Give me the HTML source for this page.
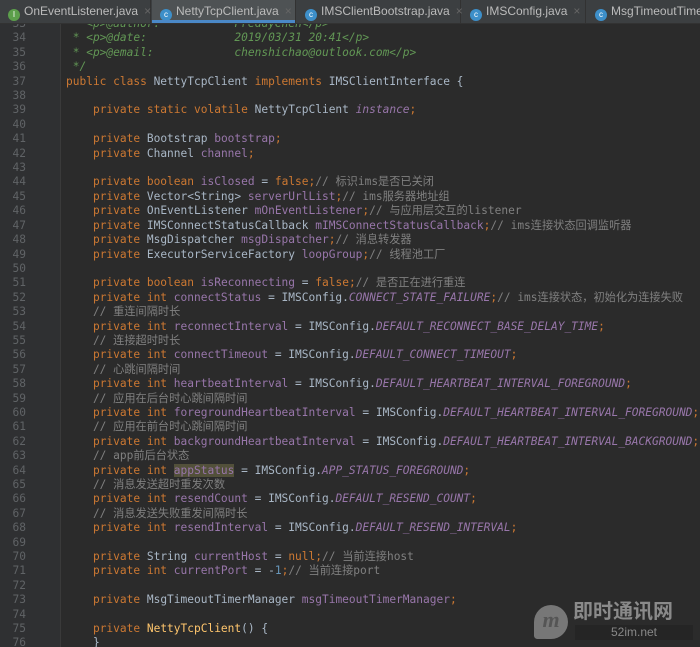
<!DOCTYPE html>
<html><head><meta charset="utf-8"><style>
html{overflow:hidden;width:700px;height:647px;}
body{margin:0;width:700px;height:647px;background:#2b2b2b;overflow:hidden;position:relative;font-family:"DejaVu Sans Mono","Liberation Mono","Noto Sans CJK SC",monospace;}
#tabs{position:absolute;left:0;top:0;width:700px;height:23px;background:#3c3f41;border-bottom:1px solid #323232;z-index:2;font-family:"Liberation Sans",sans-serif;font-size:12px;color:#bbb;overflow:hidden;}
.tab{position:absolute;top:0;height:23px;line-height:23px;white-space:nowrap;border-right:1px solid #323232;}
.tab .ic{display:inline-block;width:12px;height:12px;border-radius:50%;background:#3d8fc9;vertical-align:-2px;margin:0 4px 0 8px;color:#fff;font-size:8px;line-height:12px;text-align:center;}
.tab .x{color:#666;margin-left:6px;}
.act{background:#4e5254;}
.act:after{content:"";position:absolute;left:0;right:0;bottom:0;height:3px;background:#4a88c7;}
#gut{position:absolute;left:0;top:0;width:60px;height:647px;background:#2f3032;border-right:1px solid #3a3a3a;}
#code{position:absolute;left:0;top:17px;width:700px;font-size:11.2px;line-height:14.42px;color:#a9b7c6;white-space:normal;}
.l{height:14.42px;position:relative;white-space:nowrap;}
.n{position:absolute;left:0;width:26px;text-align:right;color:#606366;}
.t{position:absolute;left:66px;white-space:pre;}
.k{color:#cc7832}.f{color:#9876aa}.i{font-style:italic}.c{color:#808080}.d{color:#629755;font-style:italic}.m{color:#ffc66d}.num{color:#6897bb}
.hl{background:#52503a}
#wm{position:absolute;left:573px;top:598px;color:#8a8a8a;font-family:"Noto Sans CJK SC",sans-serif;font-size:20px;font-weight:bold;z-index:3;line-height:24px}
#wm2{position:absolute;left:575px;top:625px;width:118px;height:15px;background:#252525;color:#888;font:12px "Liberation Sans",sans-serif;text-align:center;line-height:15px;z-index:3}
#logo{position:absolute;left:534px;top:605px;width:34px;height:34px;border-radius:50% 50% 50% 10%;background:#777;color:#555;font:italic bold 22px "Liberation Serif",serif;text-align:center;line-height:30px;z-index:3}
</style></head><body>
<div id="tabs">
<div class="tab" style="left:0;width:150px"><span class="ic" style="background:#5c9f4b">I</span>OnEventListener.java<span class="x">×</span></div>
<div class="tab act" style="left:152px;width:143px"><span class="ic">c</span>NettyTcpClient.java<span class="x">×</span></div>
<div class="tab" style="left:297px;width:163px"><span class="ic">c</span>IMSClientBootstrap.java<span class="x">×</span></div>
<div class="tab" style="left:462px;width:123px"><span class="ic">c</span>IMSConfig.java<span class="x">×</span></div>
<div class="tab" style="left:587px;width:130px"><span class="ic">c</span>MsgTimeoutTimerManager.java</div>
</div>
<div id="gut"></div>
<div id="code"><div class="l"><span class="n">33</span><span class="t d"> * &lt;p&gt;@author:           FreddyChen&lt;/p&gt;</span></div><div class="l"><span class="n">34</span><span class="t d"> * &lt;p&gt;@date:             2019/03/31 20:41&lt;/p&gt;</span></div><div class="l"><span class="n">35</span><span class="t d"> * &lt;p&gt;@email:            chenshichao@outlook.com&lt;/p&gt;</span></div><div class="l"><span class="n">36</span><span class="t d"> */</span></div><div class="l"><span class="n">37</span><span class="t"><span class="k">public class </span>NettyTcpClient <span class="k">implements </span>IMSClientInterface {</span></div><div class="l"><span class="n">38</span></div><div class="l"><span class="n">39</span><span class="t">    <span class="k">private static volatile </span>NettyTcpClient <span class="f i">instance</span><span class="k">;</span></span></div><div class="l"><span class="n">40</span></div><div class="l"><span class="n">41</span><span class="t">    <span class="k">private </span>Bootstrap <span class="f">bootstrap</span><span class="k">;</span></span></div><div class="l"><span class="n">42</span><span class="t">    <span class="k">private </span>Channel <span class="f">channel</span><span class="k">;</span></span></div><div class="l"><span class="n">43</span></div><div class="l"><span class="n">44</span><span class="t">    <span class="k">private boolean </span><span class="f">isClosed </span>= <span class="k">false;</span><span class="c">// 标识ims是否已关闭</span></span></div><div class="l"><span class="n">45</span><span class="t">    <span class="k">private </span>Vector&lt;String&gt; <span class="f">serverUrlList</span><span class="k">;</span><span class="c">// ims服务器地址组</span></span></div><div class="l"><span class="n">46</span><span class="t">    <span class="k">private </span>OnEventListener <span class="f">mOnEventListener</span><span class="k">;</span><span class="c">// 与应用层交互的listener</span></span></div><div class="l"><span class="n">47</span><span class="t">    <span class="k">private </span>IMSConnectStatusCallback <span class="f">mIMSConnectStatusCallback</span><span class="k">;</span><span class="c">// ims连接状态回调监听器</span></span></div><div class="l"><span class="n">48</span><span class="t">    <span class="k">private </span>MsgDispatcher <span class="f">msgDispatcher</span><span class="k">;</span><span class="c">// 消息转发器</span></span></div><div class="l"><span class="n">49</span><span class="t">    <span class="k">private </span>ExecutorServiceFactory <span class="f">loopGroup</span><span class="k">;</span><span class="c">// 线程池工厂</span></span></div><div class="l"><span class="n">50</span></div><div class="l"><span class="n">51</span><span class="t">    <span class="k">private boolean </span><span class="f">isReconnecting </span>= <span class="k">false;</span><span class="c">// 是否正在进行重连</span></span></div><div class="l"><span class="n">52</span><span class="t">    <span class="k">private int </span><span class="f">connectStatus </span>= IMSConfig.<span class="f i">CONNECT_STATE_FAILURE</span><span class="k">;</span><span class="c">// ims连接状态，初始化为连接失败</span></span></div><div class="l"><span class="n">53</span><span class="t c">    // 重连间隔时长</span></div><div class="l"><span class="n">54</span><span class="t">    <span class="k">private int </span><span class="f">reconnectInterval </span>= IMSConfig.<span class="f i">DEFAULT_RECONNECT_BASE_DELAY_TIME</span><span class="k">;</span></span></div><div class="l"><span class="n">55</span><span class="t c">    // 连接超时时长</span></div><div class="l"><span class="n">56</span><span class="t">    <span class="k">private int </span><span class="f">connectTimeout </span>= IMSConfig.<span class="f i">DEFAULT_CONNECT_TIMEOUT</span><span class="k">;</span></span></div><div class="l"><span class="n">57</span><span class="t c">    // 心跳间隔时间</span></div><div class="l"><span class="n">58</span><span class="t">    <span class="k">private int </span><span class="f">heartbeatInterval </span>= IMSConfig.<span class="f i">DEFAULT_HEARTBEAT_INTERVAL_FOREGROUND</span><span class="k">;</span></span></div><div class="l"><span class="n">59</span><span class="t c">    // 应用在后台时心跳间隔时间</span></div><div class="l"><span class="n">60</span><span class="t">    <span class="k">private int </span><span class="f">foregroundHeartbeatInterval </span>= IMSConfig.<span class="f i">DEFAULT_HEARTBEAT_INTERVAL_FOREGROUND</span><span class="k">;</span></span></div><div class="l"><span class="n">61</span><span class="t c">    // 应用在前台时心跳间隔时间</span></div><div class="l"><span class="n">62</span><span class="t">    <span class="k">private int </span><span class="f">backgroundHeartbeatInterval </span>= IMSConfig.<span class="f i">DEFAULT_HEARTBEAT_INTERVAL_BACKGROUND</span><span class="k">;</span></span></div><div class="l"><span class="n">63</span><span class="t c">    // app前后台状态</span></div><div class="l"><span class="n">64</span><span class="t">    <span class="k">private int </span><span class="f hl">appStatus</span> = IMSConfig.<span class="f i">APP_STATUS_FOREGROUND</span><span class="k">;</span></span></div><div class="l"><span class="n">65</span><span class="t c">    // 消息发送超时重发次数</span></div><div class="l"><span class="n">66</span><span class="t">    <span class="k">private int </span><span class="f">resendCount </span>= IMSConfig.<span class="f i">DEFAULT_RESEND_COUNT</span><span class="k">;</span></span></div><div class="l"><span class="n">67</span><span class="t c">    // 消息发送失败重发间隔时长</span></div><div class="l"><span class="n">68</span><span class="t">    <span class="k">private int </span><span class="f">resendInterval </span>= IMSConfig.<span class="f i">DEFAULT_RESEND_INTERVAL</span><span class="k">;</span></span></div><div class="l"><span class="n">69</span></div><div class="l"><span class="n">70</span><span class="t">    <span class="k">private </span>String <span class="f">currentHost </span>= <span class="k">null;</span><span class="c">// 当前连接host</span></span></div><div class="l"><span class="n">71</span><span class="t">    <span class="k">private int </span><span class="f">currentPort </span>= -<span class="num">1</span><span class="k">;</span><span class="c">// 当前连接port</span></span></div><div class="l"><span class="n">72</span></div><div class="l"><span class="n">73</span><span class="t">    <span class="k">private </span>MsgTimeoutTimerManager <span class="f">msgTimeoutTimerManager</span><span class="k">;</span></span></div><div class="l"><span class="n">74</span></div><div class="l"><span class="n">75</span><span class="t">    <span class="k">private </span><span class="m">NettyTcpClient</span>() {</span></div><div class="l"><span class="n">76</span><span class="t">    }</span></div></div>
<div id="logo">m</div>
<div id="wm">即时通讯网</div>
<div id="wm2">52im.net</div>
</body></html>
